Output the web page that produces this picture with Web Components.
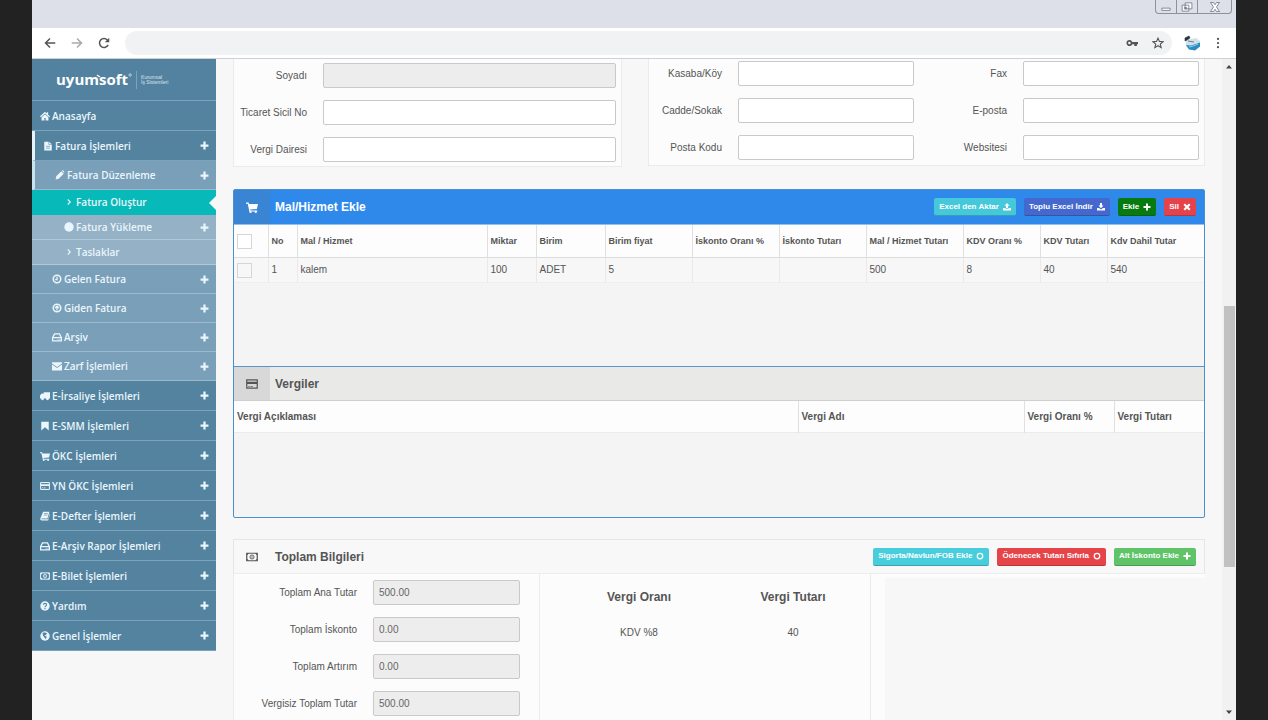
<!DOCTYPE html>
<html lang="tr">
<head>
<meta charset="utf-8">
<title>Fatura Oluştur</title>
<style>
html, body { height: 100%; }
body { margin: 0; background: #222; color: #555; font: 10px/14px "Liberation Sans", Arial, sans-serif; overflow: hidden; }
</style>
</head>
<body>
<invoice-app></invoice-app>
<script>
const ICONS = {
  home: '<path d="M8 1 0 8.500l1.200 1.300L8 4l6.800 5.800L16 8.500l-3-2.700V2h-2v2z"/><path d="M8 5.200 2.500 10v5H7v-4h2v4h4.500v-5z"/>',
  file: '<path d="M2 1h7v5h5v9H2zM10 1l4 4h-4z"/><path d="M5 8.500h6M5 11.500h6" stroke="#5584a0"/>',
  pencil: '<path d="M1 15l1-5 8-8 4 4-8 8zM11 1.200c1-1 2-.7 3 .3s1.300 2 .3 3z"/>',
  chevron: '<path d="M6 4l4 4-4 4" fill="none" stroke="currentColor" stroke-width="1.800"/>',
  dot: '<circle cx="8" cy="8" r="7.500"/>',
  clock: '<circle cx="8" cy="8" r="6" fill="none" stroke="currentColor" stroke-width="2.500"/><path d="M8 4.500V9H5" fill="none" stroke="currentColor" stroke-width="2"/>',
  target: '<circle cx="8" cy="8" r="6" fill="none" stroke="currentColor" stroke-width="2.500"/><path d="M8 12V5M5 8l3-3 3 3" fill="none" stroke="currentColor" stroke-width="2"/>',
  hdd: '<path d="M1 9 4 3h8l3 6v5H1zM1 9h14" fill="none" stroke="currentColor" stroke-width="2"/><path d="M9 11h1.500v1.500H9zM12 11h1.500v1.500H12z"/>',
  mail: '<path d="M0 2h16v2L8 9.500 0 4zM0 5.500 8 11l8-5.500V15H0z"/>',
  truck: '<path d="M6 2h10v10H6zM0 12V7l2.500-3H6v8z"/><circle cx="4" cy="12.500" r="2.300"/><circle cx="12" cy="12.500" r="2.300"/>',
  bookmark: '<path d="M2 1h12v14l-6-5-6 5z"/>',
  cart: '<path d="M0 2h3.500l.5 2h12l-1.500 6.500-9 .8.300 1.200H15V14H4.500L2.300 3.500H0z"/><circle cx="6" cy="14.500" r="1.500"/><circle cx="13" cy="14.500" r="1.500"/>',
  card: '<path d="M1 2.500h14v11H1z" fill="none" stroke="currentColor" stroke-width="1.600"/><path d="M1 5h14v3H1zM3 10.500h2v1H3zM6 10.500h3v1H6z"/>',
  book: '<path d="M5 1h10l-3 11H3c-1 0-1 1 0 1h10l2.500-9 .5 1-3 10H3c-2 0-3-1.500-2.500-3z"/><path d="M6.500 4h6M6 6.500h6" stroke="#5584a0"/>',
  money: '<path d="M1 3h14v10H1z" fill="none" stroke="currentColor" stroke-width="1.600"/><circle cx="8" cy="8" r="2.700" fill="none" stroke="currentColor" stroke-width="1.200"/><path d="M7.500 6.500h1v3h-1zM1 3h3L1 6zM15 3v3l-3-3zM1 13v-3l3 3zM15 13h-3l3-3z"/>',
  help: '<circle cx="8" cy="8" r="7.500"/><path d="M5.500 6C5.500 3 10.500 3 10.500 6c0 2-2.500 1.500-2.500 4M8 11v2" fill="none" stroke="#5584a0" stroke-width="1.800"/>',
  globe: '<circle cx="8" cy="8" r="7.500"/><path d="M6 2l5 1-1 3-3 1 4 2-2 4-2-3-2-2-1-4z" fill="#5584a0"/>',
  plus: '<path d="M6 1h4v5h5v4h-5v5H6v-5H1V6h5z"/>',
  times: '<path d="M1 4l3-3 4 4 4-4 3 3-4 4 4 4-3 3-4-4-4 4-3-3 4-4z"/>',
  upload: '<path d="M8 0l5 5.500h-3V10H6V5.500H3zM0 10h5v1.500h6V10h5v5H0z"/>',
  download: '<path d="M6 0h4v5h3L8 10.500 3 5h3zM0 10h4l4 3 4-3h4v5H0z"/>',
  ring: '<circle cx="8" cy="8" r="5.500" fill="none" stroke="currentColor" stroke-width="2.500"/>',
  back: '<path d="M15 8H2M8 2L2 8l6 6" fill="none" stroke="currentColor" stroke-width="2"/>',
  forward: '<path d="M1 8h13M8 2l6 6-6 6" fill="none" stroke="currentColor" stroke-width="2"/>',
  reload: '<path d="M13.500 10.500A6 6 0 1 1 12.500 4" fill="none" stroke="currentColor" stroke-width="2"/><path d="M15 1v6H9z"/>',
  key: '<path d="M8.300 6.500H16v3h-1.500V12H11V9.500H8.300a4 4 0 1 1 0-3zM4.500 6.300a1.700 1.700 0 1 0 0 3.400 1.700 1.700 0 0 0 0-3.400z" fill-rule="evenodd"/>',
  star: '<path d="M8 1.500l1.900 4.400 4.800.4-3.700 3.200 1.200 4.700L8 11.700l-4.200 2.500L5 9.500 1.300 6.300l4.800-.4z" fill="none" stroke="currentColor" stroke-width="1.500"/>',
  more: '<circle cx="8" cy="2.500" r="1.500"/><circle cx="8" cy="8" r="1.500"/><circle cx="8" cy="13.500" r="1.500"/>',
  avatar: '<path d="M2 5l10-2 4 3v5l-5 4-6-1-3-3z" fill="#cfe3ee"/><path d="M2 10l5 .5 9-3v4l-5 4-6-1z" fill="#2c8cc0"/><path d="M5 12l4-1 5-2" stroke="#8fd0ee" fill="none"/><path d="M1 3l4-2 1 2-3 2-2 1zM4 6l6 1" fill="#29333b" stroke="#29333b" stroke-width=".6"/>',
  minimize: '<path d="M2.500 9.500h11v3h-11z" fill="#fff" stroke="#666b78"/>',
  restore: '<path d="M5.500 2.500h9v8h-9zM1.500 5.500h9v8h-9zM4.500 8.500h3v2h-3z" fill="#fff" stroke="#666b78"/>',
  close: '<path d="M2 2h4l2 3 2-3h4l-4 6 4 6h-4l-2-3-2 3H2l4-6z" fill="#fff" stroke="#666b78"/>',
  up: '<path d="M2 11l6-7 6 7z"/>',
  down: '<path d="M2 5l6 7 6-7z"/>'
};

function define(name, render) {
  customElements.define(name, class extends HTMLElement {
    connectedCallback() {
      if (this.shadowRoot) return;
      const t = document.createElement('template');
      t.innerHTML = render(k => this.getAttribute(k) ?? '', k => this.hasAttribute(k));
      this.attachShadow({ mode: 'open' }).append(t.content.cloneNode(true));
    }
  });
}

define('ui-icon', at => `
  <style>
    :host { display: inline-block; flex: none; width: 10px; height: 10px; }
    svg { display: block; width: 100%; height: 100%; fill: currentColor; }
  </style>
  <svg viewBox="0 0 16 16" aria-hidden="true">${ICONS[at('name')]}</svg>`);

define('window-bar', () => `
  <style>
    :host { display: flex; justify-content: flex-end; align-items: flex-start; height: 28px; padding-right: 4px; background: #dde0e9; }
    div { display: flex; border: 1px solid #8e919c; border-top: 0; border-radius: 0 0 4px 4px; color: #666b78; }
    button { display: flex; align-items: center; justify-content: center; width: 20px; height: 13px; padding: 0; border: 0; background: none; }
    button + button { border-left: 1px solid #8e919c; width: 21px; }
    button:last-child { width: 34px; }
    ui-icon { width: 12px; height: 12px; }
  </style>
  <div>
    <button aria-label="Küçült"><ui-icon name="minimize"></ui-icon></button>
    <button aria-label="Geri yükle"><ui-icon name="restore"></ui-icon></button>
    <button aria-label="Kapat"><ui-icon name="close"></ui-icon></button>
  </div>`);

define('address-bar', () => `
  <style>
    :host { display: flex; align-items: center; height: 30px; padding: 0 12px 0 12px; background: #fff; border-bottom: 1px solid #cfd0d3; color: #555; }
    button { display: flex; padding: 0; border: 0; background: none; color: inherit; margin-right: 15px; }
    button:disabled { color: #aaa; }
    ui-icon { width: 12px; height: 12px; }
    .url { flex: 1; display: flex; align-items: center; height: 24px; border-radius: 12px; background: #f1f2f3; padding-right: 8px; margin-right: 12px; }
    input { flex: 1; min-width: 0; border: 0; background: none; outline: 0; }
    .url button { margin: 0 0 0 14px; }
    .end { margin: 0 0 0 12px; }
    .avatar { width: 16px; height: 16px; }
  </style>
  <button aria-label="Geri"><ui-icon name="back"></ui-icon></button>
  <button aria-label="İleri" disabled><ui-icon name="forward"></ui-icon></button>
  <button aria-label="Yenile"><ui-icon name="reload"></ui-icon></button>
  <div class="url"><input type="text" aria-label="Adres">
    <button aria-label="Şifreler"><ui-icon name="key"></ui-icon></button>
    <button aria-label="Yer işareti"><ui-icon name="star"></ui-icon></button></div>
  <ui-icon class="avatar" name="avatar"></ui-icon>
  <button class="end" aria-label="Menü"><ui-icon name="more"></ui-icon></button>`);

define('brand-logo', () => `
  <style>
    :host { display: flex; align-items: center; height: 41px; padding-left: 24px; background: #5382a0; border-bottom: 1px solid #7ba3bd; color: #fff; }
    b { position: relative; font: 700 15px/20px "Open Sans", sans-serif; padding-right: 5px; margin: -2px 3px 0 0; }
    svg { position: absolute; left: 0; top: 0; width: 100%; height: 20px; fill: none; stroke: #fff; }
    small { border-left: 1px solid #7ba3bd; padding: 4px 0 4px 4px; font-size: 5px; line-height: 5px; color: #d3e5ef; }
  </style>
  <b>uyumsoft<svg viewBox="0 0 79 20" preserveAspectRatio="none" aria-hidden="true"><path d="M42 6l3 2" stroke-width="1.500"/><circle cx="76" cy="6" r="1.200" stroke-width=".6"/></svg></b>
  <small>Kurumsal<br>İş Sistemleri</small>`);

define('nav-item', (at, has) => `
  <style>
    :host { display: block; background: #5483a0; }
    a { box-sizing: border-box; position: relative; display: flex; align-items: center; height: 30px; padding: 0 7px 0 8px; border-bottom: 1px solid #7aa4bd; color: #eaf6fc; text-decoration: none; font: 600 10px/14px "Open Sans", sans-serif; }
    span { flex: 1; margin-left: 2px; white-space: nowrap; }
    :host([open]) a { border-left: 3px solid #e6f3fa; }
    :host([level="2"]) { background: #7a9fb9; }
    :host([level="2"]) a { height: 29px; padding-left: 20px; border-color: #9cbacd; }
    :host([level="2"][open]) a { border-left-color: #c9e2f0; }
    :host([level="3"]) { background: #94b1c5; }
    :host([level="3"]) a { height: 25px; padding-left: 32px; border-color: #b0c9d8; }
    :host([active]) { background: #07bab9; }
    :host([active]) a { border-color: #07bab9; }
    :host([active]) a::after { content: ""; position: absolute; right: 0; top: 6px; border: 7px solid transparent; border-left: 0; border-right-color: #f7f8f8; }
    .plus { width: 9px; height: 9px; }
  </style>
  <a href="#"><ui-icon name="${at('icon')}"></ui-icon><span>${at('label')}</span>${has('plus') ? '<ui-icon class="plus" name="plus"></ui-icon>' : ''}</a>`);

define('side-nav', () => `
  <style>:host { display: block; width: 184px; flex: none; } nav { display: block; }</style>
  <brand-logo></brand-logo>
  <nav>
    <nav-item icon="home" label="Anasayfa"></nav-item>
    <nav-item icon="file" label="Fatura İşlemleri" open plus></nav-item>
    <nav-item level="2" icon="pencil" label="Fatura Düzenleme" open plus></nav-item>
    <nav-item level="3" icon="chevron" label="Fatura Oluştur" active></nav-item>
    <nav-item level="3" icon="dot" label="Fatura Yükleme" plus></nav-item>
    <nav-item level="3" icon="chevron" label="Taslaklar"></nav-item>
    <nav-item level="2" icon="clock" label="Gelen Fatura" plus></nav-item>
    <nav-item level="2" icon="target" label="Giden Fatura" plus></nav-item>
    <nav-item level="2" icon="hdd" label="Arşiv" plus></nav-item>
    <nav-item level="2" icon="mail" label="Zarf İşlemleri" plus></nav-item>
    <nav-item icon="truck" label="E-İrsaliye İşlemleri" plus></nav-item>
    <nav-item icon="bookmark" label="E-SMM İşlemleri" plus></nav-item>
    <nav-item icon="cart" label="ÖKC İşlemleri" plus></nav-item>
    <nav-item icon="card" label="YN ÖKC İşlemleri" plus></nav-item>
    <nav-item icon="book" label="E-Defter İşlemleri" plus></nav-item>
    <nav-item icon="hdd" label="E-Arşiv Rapor İşlemleri" plus></nav-item>
    <nav-item icon="money" label="E-Bilet İşlemleri" plus></nav-item>
    <nav-item icon="help" label="Yardım" plus></nav-item>
    <nav-item icon="globe" label="Genel İşlemler" plus></nav-item>
  </nav>`);

define('form-field', (at, has) => `
  <style>
    :host { display: flex; align-items: center; gap: 16px; }
    label { flex: none; width: var(--label-width, 73px); text-align: right; white-space: nowrap; }
    input { box-sizing: border-box; flex: 1; min-width: 0; height: 25px; padding: 0 5px; border: 1px solid #c9c9c9; border-radius: 2px; background: #fff; color: #666; font: inherit; outline: 0; }
    input[readonly] { background: #ededed; }
  </style>
  <label for="f">${at('label')}</label><input id="f" type="text" value="${at('value')}" ${has('readonly') ? 'readonly' : ''}>`);

define('action-button', at => `
  <style>
    :host { display: block; }
    button { display: flex; align-items: center; gap: 4px; height: 18px; padding: 0 5px; border: 0; border-bottom: 1px solid rgba(0,0,0,.2); border-radius: 2px; background: var(--tone); color: #fff; font: bold 8px/12px "Liberation Sans", Arial, sans-serif; white-space: nowrap; }
    ui-icon { width: 8px; height: 8px; }
  </style>
  <button type="button"><slot></slot><ui-icon name="${at('icon')}"></ui-icon></button>`);

define('panel-head', at => `
  <style>
    :host { display: flex; align-items: center; height: 34px; }
    .icon { display: flex; align-items: center; justify-content: center; align-self: stretch; width: 36px; background: var(--icon-back, none); }
    ui-icon { width: 12px; height: 12px; }
    h2 { flex: 1; margin: 0 0 0 5px; font: bold 12px/16px "Liberation Sans", Arial, sans-serif; }
    .tools { display: flex; gap: 8px; padding-right: 8px; }
  </style>
  <span class="icon"><ui-icon name="${at('icon')}"></ui-icon></span><h2>${at('title')}</h2><div class="tools"><slot></slot></div>`);

const TABLE = `
  table { width: 100%; border-collapse: collapse; table-layout: fixed; }
  th, td { padding: 0 0 0 3px; text-align: left; border-left: 1px solid #e0e0e0; white-space: nowrap; }
  th:first-child, td:first-child { border-left: 0; }
  th { height: 32px; background: #fdfdfd; }
  thead tr { border-bottom: 1px solid #ddd; }`;

define('items-table', () => `
  <style>${TABLE}
    :host { display: block; }
    th { font-size: 9px; }
    td { height: 24px; background: #f7f7f7; border-left-color: #eaeaea; }
    tbody tr { border-bottom: 1px solid #eee; }
    input { appearance: none; box-sizing: border-box; display: block; width: 15px; height: 15px; margin: 0; border: 1px solid #d6d6d6; background: #fff; }
    td input { background: #f7f7f7; }
  </style>
  <table>
    <colgroup><col width="34"><col width="29"><col><col width="49"><col width="69"><col width="87"><col width="87"><col width="87"><col width="97"><col width="77"><col width="67"><col width="97"></colgroup>
    <thead><tr><th><input type="checkbox" aria-label="Tümünü seç"></th><th>No</th><th>Mal / Hizmet</th><th>Miktar</th><th>Birim</th><th>Birim fiyat</th><th>İskonto Oranı %</th><th>İskonto Tutarı</th><th>Mal / Hizmet Tutarı</th><th>KDV Oranı %</th><th>KDV Tutarı</th><th>Kdv Dahil Tutar</th></tr></thead>
    <tbody><tr><td><input type="checkbox" aria-label="Satır 1"></td><td>1</td><td>kalem</td><td>100</td><td>ADET</td><td>5</td><td></td><td></td><td>500</td><td>8</td><td>40</td><td>540</td></tr></tbody>
  </table>`);

define('tax-table', () => `
  <style>${TABLE} :host { display: block; } thead tr { border-bottom-color: #ebebeb; } th { height: 31px; }</style>
  <table>
    <colgroup><col><col width="226"><col width="90"><col width="90"></colgroup>
    <thead><tr><th>Vergi Açıklaması</th><th>Vergi Adı</th><th>Vergi Oranı %</th><th>Vergi Tutarı</th></tr></thead>
  </table>`);

define('party-forms', () => `
  <style>
    :host { display: grid; grid-template-columns: 389fr 557fr; gap: 26px; align-items: start; }
    section { box-sizing: border-box; background: #fcfcfc; border: 1px solid #ebebeb; border-top: 0; }
    .left { padding: 4px 5px 4px 0; }
    .right { display: flex; padding: 2px 5px 5px 0; }
    .col { display: grid; gap: 12px; }
    .a { flex: 1 1 89px; }
    .b { flex: 1 1 109px; --label-width: 93px; }
  </style>
  <section class="left col">
    <form-field label="Soyadı" readonly></form-field>
    <form-field label="Ticaret Sicil No"></form-field>
    <form-field label="Vergi Dairesi"></form-field>
  </section>
  <section class="right">
    <div class="col a">
      <form-field label="Kasaba/Köy"></form-field>
      <form-field label="Cadde/Sokak"></form-field>
      <form-field label="Posta Kodu"></form-field>
    </div>
    <div class="col b">
      <form-field label="Fax"></form-field>
      <form-field label="E-posta"></form-field>
      <form-field label="Websitesi"></form-field>
    </div>
  </section>`);

define('line-items', () => `
  <style>
    :host { display: block; border: 1px solid #4a90cf; border-radius: 2px; background: #f4f4f5; }
    .items { color: #fff; background: #2f89eb; --icon-back: #3a84d4; border-bottom: 1px solid #8fc0ee; }
    .body { min-height: 141px; color: #555; }
    .tax { background: #e9e9e8; --icon-back: #d8d8d8; border-top: 1px solid #5596cb; border-bottom: 1px solid #d0d0d0; height: 33px; }
    .taxes { min-height: 116px; }
  </style>
  <panel-head class="items" icon="cart" title="Mal/Hizmet Ekle">
    <action-button icon="upload" style="--tone:#45c8da">Excel den Aktar</action-button>
    <action-button icon="download" style="--tone:#4468cd">Toplu Excel İndir</action-button>
    <action-button icon="plus" style="--tone:#077a10">Ekle</action-button>
    <action-button icon="times" style="--tone:#e5434b">Sil</action-button>
  </panel-head>
  <div class="body"><items-table></items-table></div>
  <panel-head class="tax" icon="card" title="Vergiler"></panel-head>
  <div class="taxes"><tax-table></tax-table></div>`);

define('totals-panel', () => `
  <style>
    :host { display: flex; flex-direction: column; flex: 1 0 auto; }
    panel-head { background: #f8f8f8; border: 1px solid #e6e6e6; border-bottom-color: #eee; height: 33px; }
    .row { display: grid; grid-template-columns: 307px 331fr 334fr; flex: 1; }
    .form { box-sizing: border-box; display: grid; align-content: start; gap: 12px; padding: 6px 19px 16px 0; background: #fcfcfc; border: solid #ececec; border-width: 0 1px; --label-width: 123px; }
    .rates { box-sizing: border-box; padding: 9px 0 0 22px; background: #fcfcfc; border-right: 1px solid #ececec; }
    .blank { box-sizing: border-box; padding: 4px 0 0 14px; background: #fcfcfc; }
    .blank div { height: 100%; background: #f7f7f7; }
    table { width: 100%; border-collapse: collapse; text-align: center; table-layout: fixed; }
    th { padding: 0; height: 28px; font-size: 12px; }
    td { padding: 0; height: 44px; }
  </style>
  <panel-head icon="money" title="Toplam Bilgileri">
    <action-button icon="ring" style="--tone:#48cddc">Sigorta/Navlun/FOB Ekle</action-button>
    <action-button icon="ring" style="--tone:#e54448">Ödenecek Tutarı Sıfırla</action-button>
    <action-button icon="plus" style="--tone:#5fc468">Alt İskonto Ekle</action-button>
  </panel-head>
  <div class="row">
    <div class="form">
      <form-field label="Toplam Ana Tutar" value="500.00" readonly></form-field>
      <form-field label="Toplam İskonto" value="0.00" readonly></form-field>
      <form-field label="Toplam Artırım" value="0.00" readonly></form-field>
      <form-field label="Vergisiz Toplam Tutar" value="500.00" readonly></form-field>
    </div>
    <div class="rates">
      <table><thead><tr><th>Vergi Oranı</th><th>Vergi Tutarı</th></tr></thead>
      <tbody><tr><td>KDV %8</td><td>40</td></tr></tbody></table>
    </div>
    <div class="blank"><div></div></div>
  </div>`);

define('scroll-rail', () => `
  <style>
    :host { display: flex; flex-direction: column; align-items: center; width: 14px; flex: none; padding: 4px 0; box-sizing: border-box; background: #f1f1f2; color: #444; }
    ui-icon { width: 8px; height: 8px; }
    .before { flex: 235; } .thumb { flex: 262; width: 11px; background: #c1c1c1; } .after { flex: 141; }
  </style>
  <ui-icon name="up"></ui-icon><div class="before"></div><div class="thumb"></div><div class="after"></div><ui-icon name="down"></ui-icon>`);

define('invoice-app', () => `
  <style>
    :host { display: flex; flex-direction: column; height: 100vh; margin: 0 32px; background: #f7f7f8; overflow: hidden; }
    .view { flex: 1; min-height: 0; display: flex; }
    main { flex: 1; min-width: 0; display: flex; flex-direction: column; gap: 22px; padding: 0 17px; overflow: hidden; }
    totals-panel { margin-top: -1px; }
  </style>
  <window-bar></window-bar>
  <address-bar></address-bar>
  <div class="view">
    <side-nav></side-nav>
    <main><party-forms></party-forms><line-items></line-items><totals-panel></totals-panel></main>
    <scroll-rail></scroll-rail>
  </div>`);
</script>
</body>
</html>
